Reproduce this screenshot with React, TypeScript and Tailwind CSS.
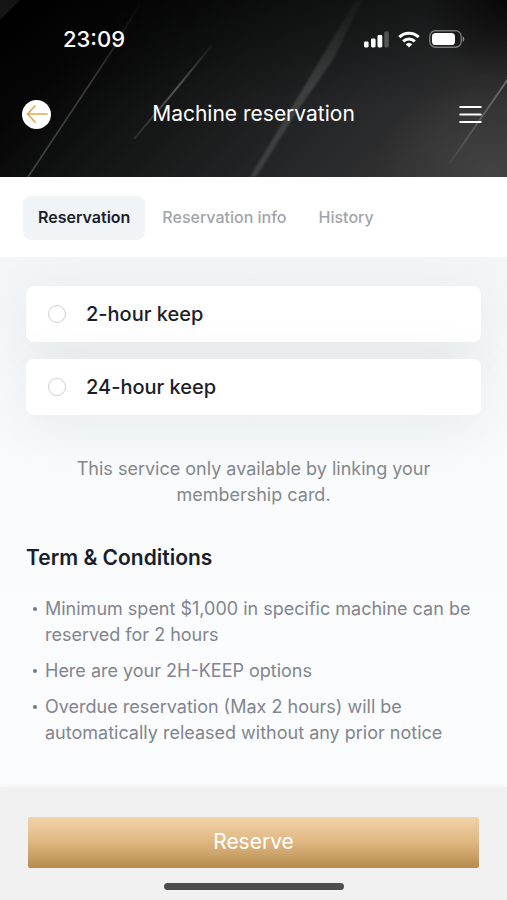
import { useState } from "react";

const TABS = ["Reservation", "Reservation info", "History"];

const OPTIONS = [
  { id: "keep-2", label: "2-hour keep" },
  { id: "keep-24", label: "24-hour keep" },
];

const TERMS = [
  "Minimum spent $1,000 in specific machine can be reserved for 2 hours",
  "Here are your 2H-KEEP options",
  "Overdue reservation (Max 2 hours) will be automatically released without any prior notice",
];

function HeaderTexture() {
  return (
    <svg
      className="absolute inset-0 h-full w-full"
      viewBox="0 0 507 177"
      preserveAspectRatio="none"
      aria-hidden="true"
    >
      <defs>
        <linearGradient id="base" x1="0" y1="0" x2="1" y2="0.35">
          <stop offset="0" stopColor="#000000" />
          <stop offset="0.22" stopColor="#060606" />
          <stop offset="0.5" stopColor="#161717" />
          <stop offset="0.8" stopColor="#262728" />
          <stop offset="1" stopColor="#303031" />
        </linearGradient>
        <linearGradient id="topShade" x1="0" y1="0" x2="0" y2="1">
          <stop offset="0" stopColor="#000" stopOpacity="0.4" />
          <stop offset="0.6" stopColor="#000" stopOpacity="0" />
        </linearGradient>
        <linearGradient id="glint" x1="0" y1="0" x2="0" y2="1">
          <stop offset="0" stopColor="#fff" stopOpacity="0.02" />
          <stop offset="0.5" stopColor="#fff" stopOpacity="0.14" />
          <stop offset="1" stopColor="#fff" stopOpacity="0.12" />
        </linearGradient>
        <linearGradient id="thin" gradientUnits="userSpaceOnUse" x1="0" y1="0" x2="0" y2="177">
          <stop offset="0" stopColor="#fff" stopOpacity="0" />
          <stop offset="0.45" stopColor="#fff" stopOpacity="0.18" />
          <stop offset="1" stopColor="#fff" stopOpacity="0.2" />
        </linearGradient>
        <linearGradient id="short" gradientUnits="userSpaceOnUse" x1="0" y1="45" x2="0" y2="139">
          <stop offset="0" stopColor="#fff" stopOpacity="0.02" />
          <stop offset="0.45" stopColor="#fff" stopOpacity="0.26" />
          <stop offset="1" stopColor="#fff" stopOpacity="0.08" />
        </linearGradient>
        <linearGradient id="streak" gradientUnits="userSpaceOnUse" x1="0" y1="79" x2="0" y2="163">
          <stop offset="0" stopColor="#fff" stopOpacity="0.3" />
          <stop offset="1" stopColor="#fff" stopOpacity="0.05" />
        </linearGradient>
        <radialGradient id="glow" cx="0.9" cy="0.95" r="0.75">
          <stop offset="0" stopColor="#fff" stopOpacity="0.09" />
          <stop offset="1" stopColor="#fff" stopOpacity="0" />
        </radialGradient>
        <radialGradient id="corner" cx="1" cy="0" r="1">
          <stop offset="0" stopColor="#000" stopOpacity="0.7" />
          <stop offset="1" stopColor="#000" stopOpacity="0" />
        </radialGradient>
        <filter id="soft" x="-20%" y="-20%" width="140%" height="140%">
          <feGaussianBlur stdDeviation="1" />
        </filter>
        <filter id="softer" x="-20%" y="-20%" width="140%" height="140%">
          <feGaussianBlur stdDeviation="0.5" />
        </filter>
      </defs>
      <rect width="507" height="177" fill="url(#base)" />
      <path d="M0 0H20L0 20Z" fill="#222" />
      <rect x="350" y="60" width="157" height="117" fill="url(#glow)" />
      <rect width="507" height="177" fill="url(#topShade)" />
      <rect x="420" width="87" height="80" fill="url(#corner)" />
      <path d="M28 177L113 49L142 0" fill="none" stroke="url(#thin)" strokeWidth="1.8" filter="url(#softer)" />
      <path d="M134 139L172 94L212 45" fill="none" stroke="url(#short)" strokeWidth="2" filter="url(#softer)" />
      <path d="M250 177L356 0H362L334 58L296 113L256 177Z" fill="url(#glint)" filter="url(#soft)" />
      <path d="M450 163L508 79" fill="none" stroke="url(#streak)" strokeWidth="2" filter="url(#softer)" />
    </svg>
  );
}

function StatusBar() {
  return (
    <div className="flex h-[78px] items-center justify-between pr-[42px] pl-[63px]">
      <time className="text-[22px] leading-7 font-medium">23:09</time>
      <div className="flex items-center gap-[9px]">
        <svg width="26" height="17" viewBox="0 0 26 17" fill="currentColor" aria-label="Signal">
          <rect x="1" y="10.5" width="4.6" height="6" rx="1.4" />
          <rect x="8" y="7.5" width="4.6" height="9" rx="1.4" />
          <rect x="14.5" y="4" width="4.8" height="12.5" rx="1.4" />
          <rect x="21.3" y="0.5" width="4.5" height="16" rx="1.4" opacity="0.25" />
        </svg>
        <svg width="22" height="17" viewBox="0 0 22 17" fill="none" stroke="currentColor" strokeWidth="3" aria-label="Wi-Fi">
          <path d="M1.3 6.2a14 14 0 0 1 19.4 0" />
          <path d="M5.2 10.3a8.4 8.4 0 0 1 11.6 0" />
          <path d="M11 16.6 7.7 13.3a4.8 4.8 0 0 1 6.6 0Z" fill="currentColor" stroke="none" />
        </svg>
        <svg width="36" height="18" viewBox="0 0 36 18" fill="none" aria-label="Battery">
          <rect x="0.8" y="0.8" width="31.4" height="16.4" rx="5.6" stroke="#fff" strokeOpacity="0.4" strokeWidth="1.4" />
          <rect x="3" y="3" width="23" height="12" rx="3.6" fill="#fff" />
          <path d="M33.7 6.2c2.1.9 2.1 4.7 0 5.6Z" fill="#fff" fillOpacity="0.5" />
        </svg>
      </div>
    </div>
  );
}

export default function App() {
  const [tab, setTab] = useState(TABS[0]);
  const [choice, setChoice] = useState("");

  return (
    <div className="flex min-h-screen flex-col bg-[#f9fbfd] font-[Inter,sans-serif] text-[#1a1d2b]">
      <header className="relative bg-black text-white">
        <HeaderTexture />
        <div className="relative h-[177px]">
          <StatusBar />
          <div className="flex h-[72px] items-center justify-between pr-[25px] pl-[22px]">
            <button type="button" aria-label="Back" className="flex size-[29px] items-center justify-center rounded-full bg-white">
              <svg width="22" height="20" viewBox="0 0 22 20" fill="none" stroke="#d9ad4e" strokeWidth="1.7" strokeLinecap="round" strokeLinejoin="round">
                <path d="M21 10H1.5M9 2 1.5 10 9 18" />
              </svg>
            </button>
            <h1 className="text-[21px] leading-7 font-normal">Machine reservation</h1>
            <button type="button" aria-label="Menu" className="flex h-[29px] w-[26px] items-center justify-end">
              <svg width="23" height="19" viewBox="0 0 23 19" stroke="#fff" strokeWidth="2.2" strokeLinecap="round">
                <path d="M1.3 2H21.7M1.3 9.5H21.7M1.3 17H21.7" />
              </svg>
            </button>
          </div>
        </div>
      </header>

      <nav className="flex gap-0.5 bg-white px-[23px] pt-[19px] pb-[17px]">
        {TABS.map((name) => (
          <button
            key={name}
            type="button"
            aria-current={tab === name ? "page" : undefined}
            onClick={() => setTab(name)}
            className={
              tab === name
                ? "h-11 rounded-lg bg-[#f1f4f6] px-[15px] pb-0.5 text-base font-semibold text-[#1a1d2b]"
                : "h-11 rounded-lg px-[15px] pb-0.5 text-base font-medium text-[#a0a5ab]"
            }
          >
            {name}
          </button>
        ))}
      </nav>

      <main className="flex-1 overflow-hidden bg-linear-to-b from-[#f3f5f7] via-[#f9fbfd] via-45% to-[#fafcfe] px-[26px] pt-[29px] pb-10">
        <fieldset aria-label="Keep duration" className="flex flex-col gap-[17px]">
          {OPTIONS.map((o) => (
            <label
              key={o.id}
              htmlFor={o.id}
              className="flex h-14 items-center gap-5 rounded-lg bg-white pl-[22px] text-xl font-medium shadow-[0_10px_60px_rgba(30,40,30,0.07)]"
            >
              <input
                id={o.id}
                type="radio"
                name="keep"
                checked={choice === o.id}
                onChange={() => setChoice(o.id)}
                className="size-[18px] appearance-none rounded-full border border-[#cfd0d1] checked:border-[6px] checked:border-[#c49a58]"
              />
              {o.label}
            </label>
          ))}
        </fieldset>

        <p className="mx-auto mt-[41px] max-w-[400px] text-center text-lg leading-[26px] text-[#85878c]">
          This service only available by linking your membership card.
        </p>

        <h2 className="mt-9 text-[21px] leading-7 font-semibold">Term &amp; Conditions</h2>

        <ul className="mt-6 flex flex-col gap-[10px] text-lg leading-[26px] text-[#82858d]">
          {TERMS.map((t) => (
            <li key={t} className="flex gap-2 pl-[7px]">
              <span aria-hidden="true" className="mt-[11px] size-1 shrink-0 rounded-full bg-[#737680]" />
              <span>{t}</span>
            </li>
          ))}
        </ul>
      </main>

      <footer className="flex flex-col items-center bg-[#f1f1f1] px-7 pt-[30px] pb-[10px] shadow-[0_0_6px_#f1f1f1]">
        <button
          type="button"
          className="h-[51px] w-full rounded-xs bg-linear-to-b from-[#f3d3aa] via-[#dfb680] via-50% to-[#b58c4c] pb-0.5 text-[21px] text-white"
        >
          Reserve
        </button>
        <div className="mt-[15px] h-[7px] w-[180px] rounded-full bg-[#4d4d4d]" />
      </footer>
    </div>
  );
}
